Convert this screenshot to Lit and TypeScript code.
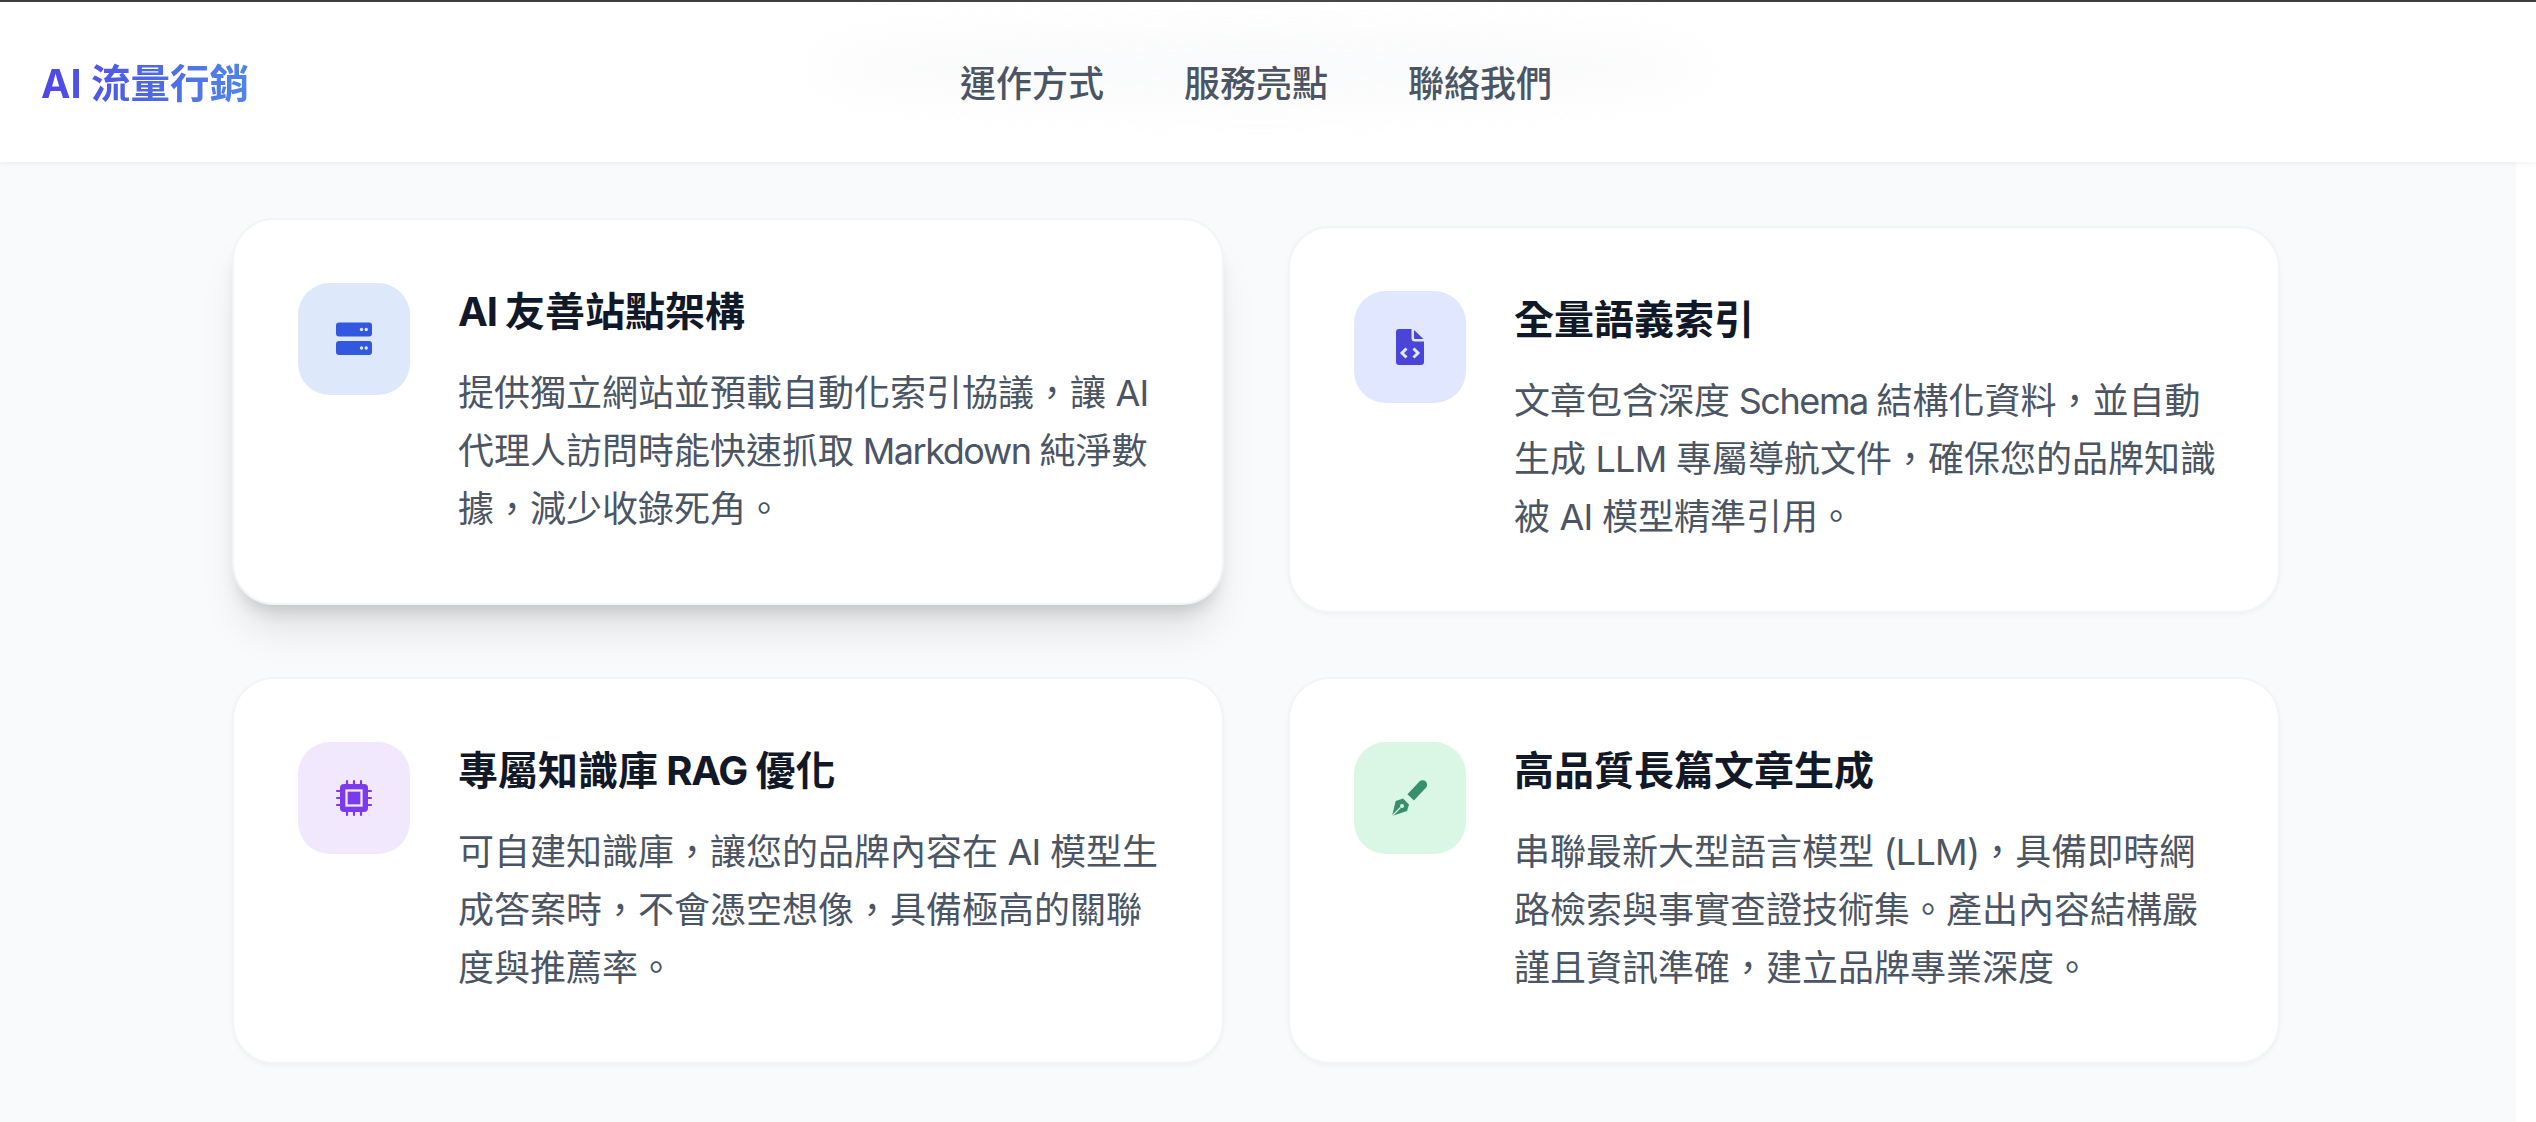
import { LitElement, html, css, svg } from "lit";
import { customElement } from "lit/decorators.js";

const serverIcon = svg`
  <g transform="translate(0 1.500)">
    <rect x="0" y="0" width="36" height="14" rx="3" fill="currentColor" />
    <rect x="0" y="18.500" width="36" height="14" rx="3" fill="currentColor" />
    <circle cx="25.500" cy="7" r="1.700" fill="#dde8fb" />
    <circle cx="30.200" cy="7" r="1.700" fill="#dde8fb" />
    <circle cx="25.500" cy="25.500" r="1.700" fill="#dde8fb" />
    <circle cx="30.200" cy="25.500" r="1.700" fill="#dde8fb" />
  </g>
`;

const fileIcon = svg`
  <g transform="translate(4 0)">
    <path d="M3 0H15.500V9a3.500 3.500 0 0 0 3.500 3.500H28V33a3 3 0 0 1-3 3H3a3 3 0 0 1-3-3V3a3 3 0 0 1 3-3z" fill="currentColor" />
    <path d="M18 1L27.500 10H19a1 1 0 0 1-1-1z" fill="currentColor" />
    <path d="M10.500 19.500L6 24l4.500 4.500M17.500 19.500L22 24l-4.500 4.500" fill="none" stroke="#e0e7ff" stroke-width="3" />
  </g>
`;

const chipIcon = svg`
  <g stroke="currentColor" stroke-width="2.200" stroke-linecap="round">
    <path d="M11 1v5M18 1v5M25 1v5M11 30v5M18 30v5M25 30v5M1 11h5M1 18h5M1 25h5M30 11h5M30 18h5M30 25h5" />
  </g>
  <rect x="4" y="4" width="28" height="28" rx="4" fill="currentColor" />
  <rect x="10.500" y="10.500" width="15" height="15" fill="none" stroke="#f1e8fd" stroke-width="2.300" />
`;

const penIcon = svg`
  <path d="M30.300 5L18.700 17.300" fill="none" stroke="currentColor" stroke-width="9" />
  <circle cx="30.600" cy="4.800" r="4.500" fill="currentColor" />
  <path d="M0 36L3.700 21L11 18.500L17 24.500L15 31z" fill="currentColor" />
  <path d="M0 36L8.500 27.500" stroke="#d9f7e4" stroke-width="1.300" />
  <circle cx="10" cy="26" r="2" fill="#d9f7e4" />
`;

const cards = [
  {
    title: "AI 友善站點架構",
    lines: ["提供獨立網站並預載自動化索引協議，讓 AI", "代理人訪問時能快速抓取 Markdown 純淨數", "據，減少收錄死角。"],
    tone: "blue",
    icon: serverIcon,
    raised: true,
  },
  {
    title: "全量語義索引",
    lines: ["文章包含深度 Schema 結構化資料，並自動", "生成 LLM 專屬導航文件，確保您的品牌知識", "被 AI 模型精準引用。"],
    tone: "indigo",
    icon: fileIcon,
  },
  {
    title: "專屬知識庫 RAG 優化",
    lines: ["可自建知識庫，讓您的品牌內容在 AI 模型生", "成答案時，不會憑空想像，具備極高的關聯", "度與推薦率。"],
    tone: "purple",
    icon: chipIcon,
  },
  {
    title: "高品質長篇文章生成",
    lines: ["串聯最新大型語言模型 (LLM)，具備即時網", "路檢索與事實查證技術集。產出內容結構嚴", "謹且資訊準確，建立品牌專業深度。"],
    tone: "green",
    icon: penIcon,
  },
];

// the reference sets latin runs tighter than our Inter, mixed-case words most of all
const tightenLatin = (text: string) =>
  text
    .split(/(\s?[A-Za-z()]+\s?)/)
    .map((part, i) =>
      i % 2 ? html`<span class=${/[a-z]/.test(part) ? "word" : "caps"}>${part}</span>` : part
    );

@customElement("app-root")
export class AppRoot extends LitElement {
  static styles = css`
    :host {
      display: block;
      width: 2536px;
      height: 1122px;
      overflow: hidden;
      background: #ffffff;
      font-family: Inter, "Noto Sans CJK TC", sans-serif;
    }

    .topline {
      height: 2px;
      background: #3f3f3f;
    }

    .nav {
      position: relative;
      z-index: 1;
      display: grid;
      grid-template-columns: 919px auto;
      align-items: center;
      height: 160px;
      padding-left: 41px;
      padding-bottom: 3px;
      box-sizing: border-box;
      background: #ffffff;
      box-shadow: 0 2px 5px rgba(0, 0, 0, 0.05);
    }

    .nav::before {
      content: "";
      position: absolute;
      left: 810px;
      top: 30px;
      width: 900px;
      height: 70px;
      border-radius: 50%;
      background: #f6f7f9;
      filter: blur(24px);
      opacity: 0.6;
    }

    .logo {
      position: relative;
      font-size: 39.500px;
      font-weight: 700;
      background: linear-gradient(90deg, #4f46e5, #4f86e8);
      -webkit-background-clip: text;
      background-clip: text;
      color: transparent;
      width: fit-content;
    }

    .links {
      position: relative;
      display: flex;
      gap: 80px;
      font-size: 36px;
      font-weight: 500;
      color: #4b5563;
    }

    main {
      width: 2516px;
      height: 960px;
      box-sizing: border-box;
      padding: 64px 236px 0 232px;
      background: #f9fafb;
    }

    .grid {
      display: grid;
      grid-template-columns: 992px 992px;
      column-gap: 64px;
      row-gap: 64px;
    }

    .card {
      display: flex;
      gap: 48px;
      height: 387px;
      box-sizing: border-box;
      padding: 63px 63px 63px 64px;
      background: #ffffff;
      border: 2px solid #f3f4f6;
      border-radius: 42px;
      box-shadow: 0 2px 4px rgba(0, 0, 0, 0.04);
    }

    .card.raised {
      transform: translateY(-8px);
      box-shadow:
        0 32px 40px -8px rgba(0, 0, 0, 0.1),
        0 13px 16px -6px rgba(0, 0, 0, 0.13);
    }

    .icon {
      flex: none;
      display: flex;
      align-items: center;
      justify-content: center;
      width: 112px;
      height: 112px;
      border-radius: 32px;
    }

    .icon svg {
      display: block;
      overflow: visible;
    }

    .blue {
      background: #dde8fb;
      color: #3358e0;
    }

    .indigo {
      background: #e0e7ff;
      color: #4b44d8;
    }

    .purple {
      background: #f1e8fd;
      color: #7c3aed;
    }

    .green {
      background: #d9f7e4;
      color: #38906a;
    }

    .text {
      padding-top: 1px;
    }

    h3 {
      margin: 0 0 24px;
      font-size: 40px;
      line-height: 56px;
      font-weight: 700;
      color: #111827;
    }

    h3 .caps {
      letter-spacing: -0.03em;
    }

    p {
      margin: 0;
      font-size: 36px;
      line-height: 58px;
      color: #4b5563;
      white-space: nowrap;
    }

    .word {
      letter-spacing: -0.04em;
    }

    .caps {
      letter-spacing: -0.02em;
    }
  `;

  render() {
    return html`
      <div class="topline"></div>
      <nav class="nav">
        <div class="logo">AI 流量行銷</div>
        <div class="links">
          <span>運作方式</span>
          <span>服務亮點</span>
          <span>聯絡我們</span>
        </div>
      </nav>
      <main>
        <div class="grid">
          ${cards.map(
            (c) => html`
              <article class="card ${c.raised ? "raised" : ""}">
                <div class="icon ${c.tone}">
                  <svg width="36" height="36" viewBox="0 0 36 36">${c.icon}</svg>
                </div>
                <div class="text">
                  <h3>${tightenLatin(c.title)}</h3>
                  <p>${c.lines.map((line) => html`${tightenLatin(line)}<br />`)}</p>
                </div>
              </article>
            `
          )}
        </div>
      </main>
    `;
  }
}
